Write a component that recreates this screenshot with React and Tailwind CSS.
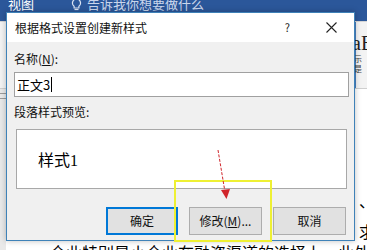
import React from 'react';

const cjk = "font-['Microsoft_YaHei','Noto_Sans_CJK_SC',sans-serif]";

function WordBackground() {
    return (
        <div className="flex h-full flex-col">
            {/* Ribbon title band */}
            <div className="flex h-[21px] shrink-0 items-start gap-[37px] bg-[#2b579a] pl-[8px] text-white">
                <span className="-mt-[4px] text-[13px] leading-[16px]">视图</span>
                <span className="-mt-[4px] flex items-center gap-[5px] text-[13px] leading-[16px] text-[#c9d6ec]">
                    <svg width="11" height="13" viewBox="0 0 11 13" fill="none" stroke="#dbe4f3" strokeWidth="1.2">
                        <path d="M5.5 1a4 4 0 0 0-2.4 7.2V10h4.8V8.2A4 4 0 0 0 5.5 1z" />
                        <path d="M3.5 11.5h4" />
                    </svg>
                    告诉我你想要做什么
                </span>
            </div>
            <div className="h-px shrink-0 bg-[#d5d5d5]" />
            {/* Ribbon body */}
            <div className="flex h-[66px] shrink-0 justify-end bg-[#f3f3f3]">
                <div className="flex w-[12px] flex-col border-l border-[#4a7fc0] pt-[10px]">
                    <span className="-ml-[4px] font-['Liberation_Serif',serif] text-[20px] leading-[22px] text-[#222]">aB</span>
                    <span className="-ml-[2px] text-[8px] leading-[10px] text-[#444]">示是</span>
                </div>
            </div>
            <div className="h-px shrink-0 bg-[#cfcfcf]" />
            {/* Document */}
            <div className="flex min-h-0 flex-1 bg-white">
                <div className="flex w-[6px] flex-col gap-[4px] bg-[#e9e9e9] pt-[4px]">
                    <div className="h-px bg-[#9a9a9a]" />
                    <div className="h-px bg-[#9a9a9a]" />
                </div>
                <div className="flex flex-1 flex-col items-end pt-[101px]">
                    <span className="-mr-[8px] h-[20px] w-[16px] shrink-0 text-[16px] leading-[20px] text-black">、</span>
                    <span className="-mr-[8px] mt-[11px] h-[20px] shrink-0 text-[16px] leading-[20px] text-black">求</span>
                    <span className="h-[20px] w-[317px] shrink-0 whitespace-nowrap text-[16px] leading-[22px] text-black">企业特别是小企业在融资渠道的选择上，此外</span>
                </div>
            </div>
        </div>
    );
}

function Button({ children, primary }) {
    return (
        <button
            className={
                'flex h-[28px] items-center justify-center bg-[#e1e1e1] text-[12px] text-[#111] ' +
                (primary ? 'w-[72px] border-2 border-[#0078d7]' : 'w-[73px] border border-[#adadad]')
            }
        >
            {children}
        </button>
    );
}

export default function App() {
    return (
        <div className={`relative h-[250px] w-[367px] overflow-hidden ${cjk}`}>
            <WordBackground />

            {/* Dialog */}
            <div className="absolute left-[6px] top-[12px] flex h-[229px] w-[349px] flex-col border border-[#3f82b8] bg-[#f0f0f0] shadow-[0_0_6px_rgba(0,0,0,0.25)]">
                <div className="flex h-[29px] items-center bg-white pl-[8px] pr-[17px]">
                    <span className="flex-1 text-[12px] text-[#111]">根据格式设置创建新样式</span>
                    <span className="mr-[36px] text-[11px] text-[#222]">?</span>
                    <svg width="11" height="11" viewBox="0 0 11 11" stroke="#222" strokeWidth="1.1">
                        <path d="M0.5 0.5l10 10M10.5 0.5l-10 10" />
                    </svg>
                </div>
                <div className="flex flex-1 flex-col px-[7px] pt-[9px]">
                    <span className="text-[12px] leading-[15px] text-[#111]">
                        名称(<span className="underline">N</span>):
                    </span>
                    <div className="mt-[6px] flex h-[25px] w-[335px] items-center border border-[#a0a0a0] bg-white pl-[2px] text-[13px] text-black">
                        正文3<span className="ml-[1px] h-[15px] w-px bg-black" />
                    </div>
                    <span className="mt-[7px] text-[12px] leading-[15px] text-[#111]">段落样式预览:</span>
                    <div className="ml-[2px] mt-[10px] flex h-[60px] w-[331px] items-center border border-[#a8a8a8] bg-white pl-[21px] pt-[4px] font-['Liberation_Serif','Noto_Sans_CJK_SC',serif] text-[16px] text-black">
                        样式1
                    </div>
                    <div className="mt-[18px] flex justify-end gap-[11px] pr-[1px]">
                        <Button primary>确定</Button>
                        <Button>
                            修改(<span className="underline">M</span>)...
                        </Button>
                        <Button>取消</Button>
                    </div>
                </div>
            </div>

            {/* Annotation: yellow box */}
            <div className="absolute left-[174px] top-[180px] h-[62px] w-[98px] border-2 border-[#eef033]" />

            {/* Annotation: red arrow */}
            <svg className="absolute left-0 top-0" width="367" height="250" viewBox="0 0 367 250">
                <path d="M218 150 L225 192" stroke="#d0242a" strokeWidth="1" strokeDasharray="3 1.5" fill="none" />
                <path d="M221 190 L230 189 L226.5 199 Z" fill="#d0242a" />
            </svg>
        </div>
    );
}
